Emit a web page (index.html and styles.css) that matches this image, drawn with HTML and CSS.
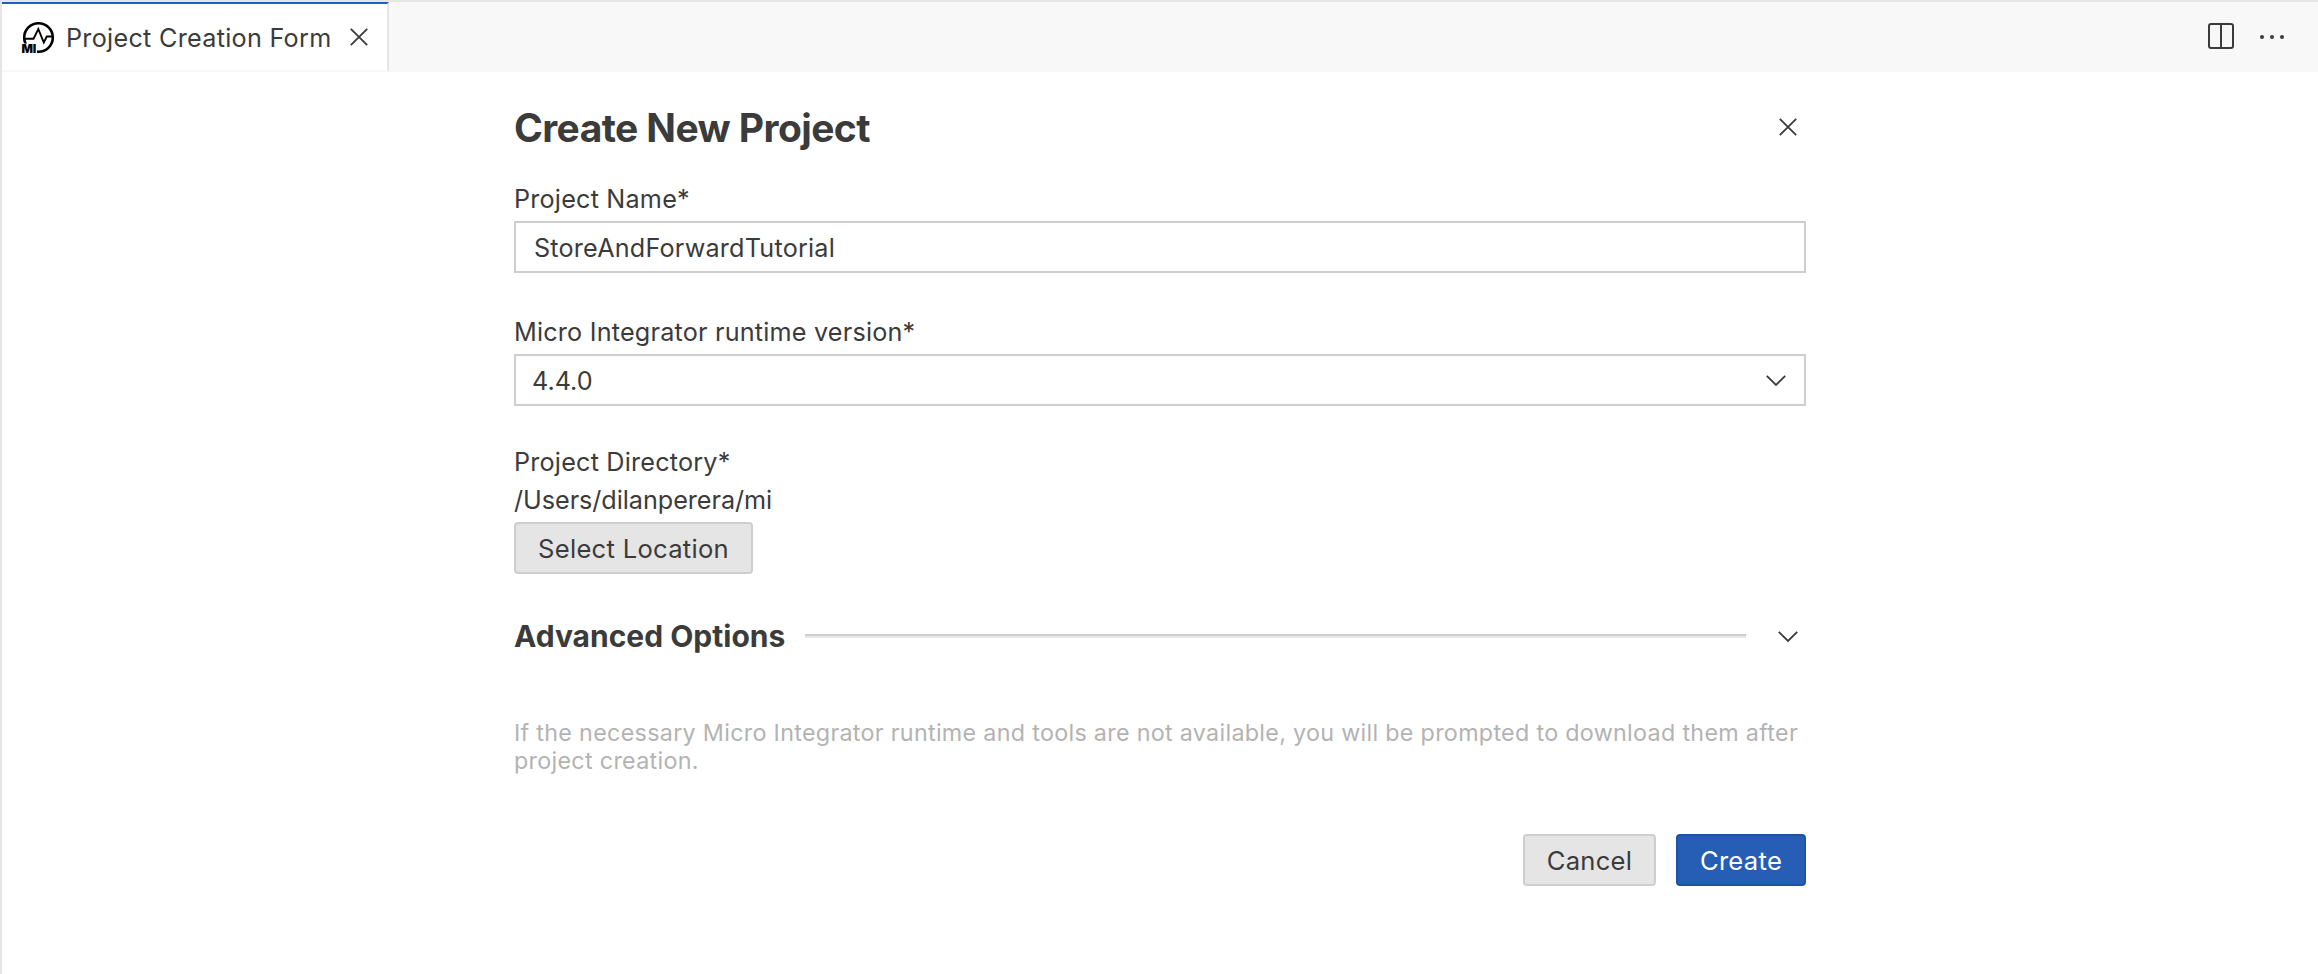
FILE: index.html
```html
<!DOCTYPE html>
<html lang="en">
<head>
<meta charset="utf-8">
<title>Project Creation Form</title>
<link rel="stylesheet" href="styles.css">
</head>
<body>
<div class="window">
  <header class="tabbar">
    <div class="tab">
      <svg class="tab-logo" viewBox="0 0 34 34"><circle cx="17.5" cy="17.5" r="14.3" fill="none" stroke="#000" stroke-width="2.6"/><path d="M4 18.8h8.500L17.300 9l5.500 13.500 3-6H31" fill="none" stroke="#000" stroke-width="1.9"/><path d="M0 23.500h16V34H0z" fill="#fff"/><text class="logo-text" x=".4" y="33">MI</text></svg>
      <span class="tab-label">Project Creation Form</span>
      <svg class="tab-close" viewBox="0 0 18 18"><path d="M.8.8l16.400 16.400M17.200.8L.8 17.200"/></svg>
    </div>
    <div class="actions">
      <svg class="split" viewBox="0 0 26 26"><rect x="1" y="1" width="24" height="24" rx="2"/><path d="M13 1v24"/></svg>
      <svg class="more" viewBox="0 0 24 4"><circle cx="2" cy="2" r="2"/><circle cx="12" cy="2" r="2"/><circle cx="22" cy="2" r="2"/></svg>
    </div>
  </header>
  <main class="form">
    <div class="form-head">
      <h1 class="title">Create New Project</h1>
      <svg class="close" viewBox="0 0 18 18"><path d="M.8.8l16.400 16.400M17.200.8L.8 17.200"/></svg>
    </div>
    <section class="field">
      <label class="label">Project Name*</label>
      <div class="input">StoreAndForwardTutorial</div>
    </section>
    <section class="field field-version">
      <label class="label">Micro Integrator runtime version*</label>
      <div class="input select"><span class="version">4.4.0</span><svg class="chevron" viewBox="0 0 20 11"><path d="M.8.8L10 10 19.200.8"/></svg></div>
    </section>
    <section class="field field-dir">
      <label class="label">Project Directory*</label>
      <div class="path">/Users/dilanperera/mi</div>
      <button class="btn btn-location">Select Location</button>
    </section>
    <div class="advanced">
      <h2 class="subtitle">Advanced Options</h2>
      <div class="rule"></div>
      <svg class="chevron" viewBox="0 0 20 11"><path d="M.8.8L10 10 19.200.8"/></svg>
    </div>
    <p class="note">If the necessary Micro Integrator runtime and tools are not available, you will be prompted to download them after<br>project creation.</p>
    <div class="footer">
      <button class="btn btn-cancel">Cancel</button>
      <button class="btn btn-create">Create</button>
    </div>
  </main>
</div>
</body>
</html>
```
FILE: styles.css
```css
* { box-sizing: border-box; }
body { margin: 0; background: #fff; color: #3b3b3b; font: 25.2px/32px Inter, sans-serif; letter-spacing: .2px; }
h1, h2, p { margin: 0; }
svg { display: block; flex: none; overflow: visible; }
.window { height: 974px; border-left: 2px solid #e5e5e5; }

.tabbar { display: flex; justify-content: space-between; height: 72px; border-top: 2px solid #e5e5e5; background: #f8f8f8; }
.tab { display: flex; align-items: center; width: 387px; height: 70px; padding-left: 19px; border-top: 2px solid #225ebd; border-right: 2px solid #e5e5e5; border-bottom: 2px solid #f8f8f8; background: #fff; }
.tab-logo { width: 34px; height: 34px; }
.logo-text { font: 900 12px Inter, sans-serif; letter-spacing: 0; fill: #000; }
.tab-label { width: 264px; margin-left: 11px; padding-top: 2px; letter-spacing: .28px; white-space: nowrap; }
.tab-close { margin-left: 20px; }
.tab-close, .close { width: 18px; height: 18px; fill: none; stroke: #3b3b3b; stroke-width: 1.8; }
.actions { display: flex; align-items: center; gap: 26px; padding: 0 34px 2px 0; }
.split { width: 26px; height: 26px; fill: none; stroke: #3b3b3b; stroke-width: 2; }
.more { width: 24px; height: 4px; margin-top: 2px; fill: #3b3b3b; }

.form { display: flex; flex-direction: column; width: 1292px; margin-left: 512px; padding-top: 32px; }
.form-head { display: flex; align-items: center; justify-content: space-between; height: 48px; padding-right: 9px; }
.title { font-size: 39px; line-height: 48px; font-weight: 700; letter-spacing: -.58px; }
.close { margin-bottom: 2px; }
.field { margin-top: 30px; }
.label { display: block; height: 39px; padding-top: 1px; }
.input { display: flex; align-items: center; height: 52px; padding: 1px 18px 0; border: 2px solid #cecece; }
.field-version { margin-top: 42px; }
.select { justify-content: space-between; padding-left: 16px; }
.version { letter-spacing: 0; }
.chevron { width: 20px; height: 11px; fill: none; stroke: #3b3b3b; stroke-width: 1.8; }
.field-dir { margin-top: 39px; }
.path { height: 38px; letter-spacing: -.04px; }
.btn { height: 52px; padding: 1px 0 0; border: 2px solid #cecece; border-radius: 4px; background: #e5e5e5; color: #3b3b3b; font: inherit; font-size: 25.6px; letter-spacing: .28px; }
.btn-location { display: block; width: 239px; }
.advanced { display: flex; align-items: center; height: 40px; margin-top: 42px; padding-right: 8px; }
.subtitle { width: 291px; font-size: 30px; line-height: 40px; font-weight: 700; letter-spacing: 0; white-space: nowrap; }
.rule { width: 941px; height: 4px; border-top: 2px solid #cecece; background: #e8e8e8; }
.advanced .chevron { margin-left: auto; }
.note { margin-top: 63px; font-size: 23.3px; line-height: 28px; letter-spacing: .305px; color: #b3b3b3; white-space: nowrap; }
.footer { display: flex; justify-content: flex-end; gap: 20px; margin-top: 59px; }
.btn-cancel { width: 133px; }
.btn-create { width: 130px; border-color: #1f53a5; background: #265eb5; color: #fff; }
```
